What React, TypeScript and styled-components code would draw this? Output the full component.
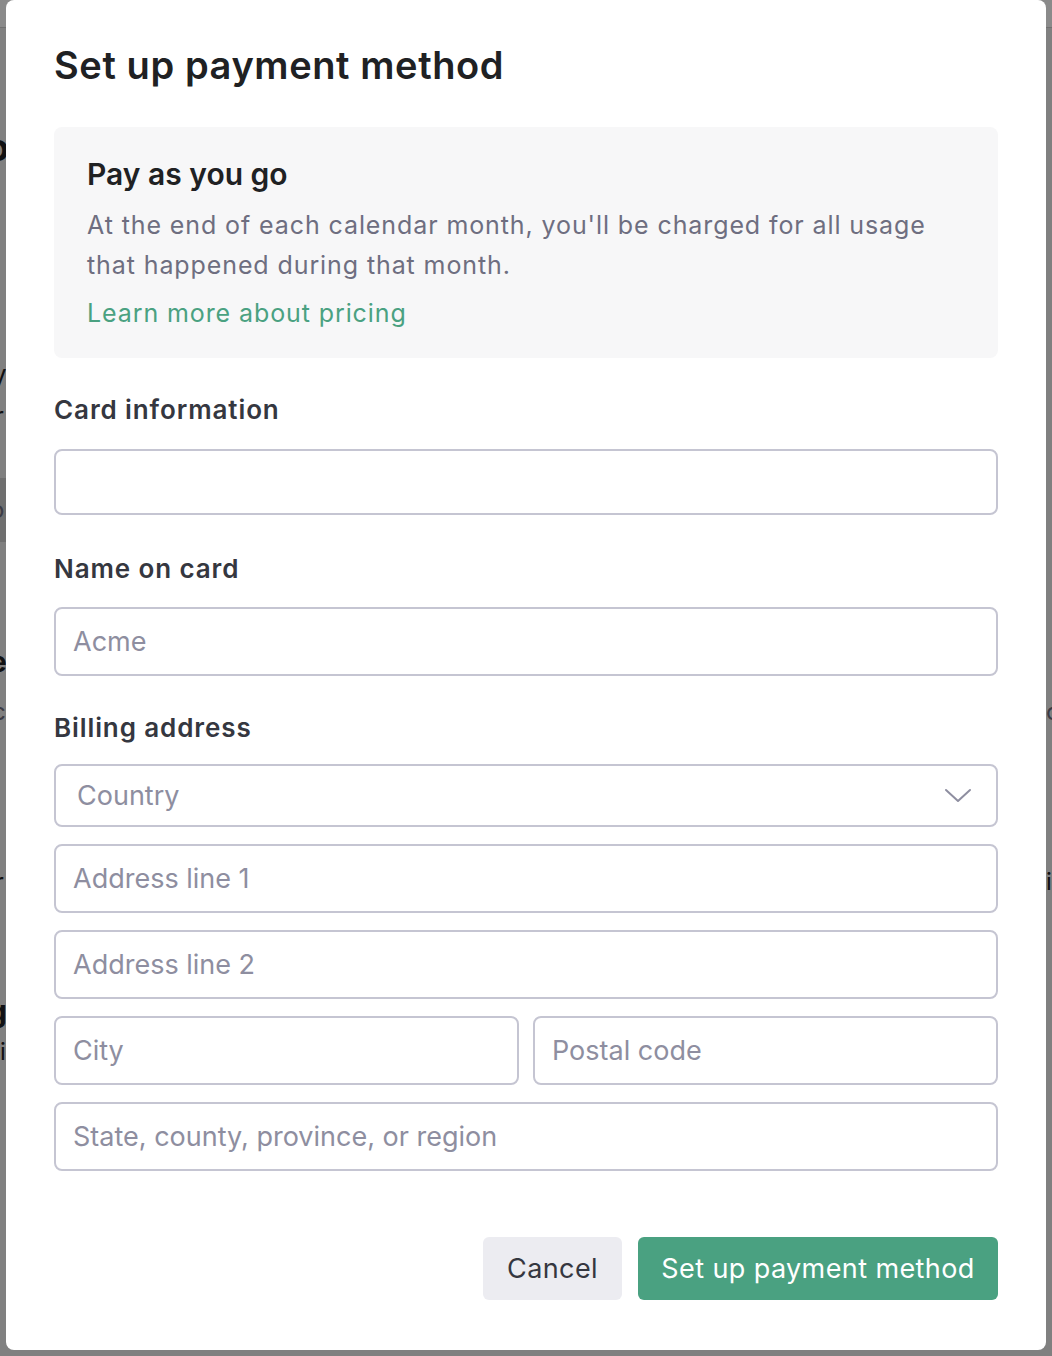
import React from "react";
import styled, { createGlobalStyle } from "styled-components";

const Global = createGlobalStyle`
  html, body { margin: 0; padding: 0; }
  body { font-family: Inter, "Noto Sans", "Liberation Sans", sans-serif; -webkit-font-smoothing: antialiased; }
  * { box-sizing: border-box; }
`;

const Page = styled.div`
  position: relative;
  width: 1052px;
  height: 1356px;
  overflow: hidden;
  background: #ececec;
`;

const PageHeader = styled.div`
  height: 28px;
  background: #ffffff;
  border-bottom: 1px solid #d0d0d0;
`;

const NavBand = styled.div`
  position: absolute;
  left: 0;
  top: 478px;
  width: 40px;
  height: 64px;
  background: #cdcdcd;
`;

const Glyph = styled.span<{ $top: number; $left: number; $size: number; $bold?: boolean; $light?: boolean }>`
  position: absolute;
  top: ${(p) => p.$top}px;
  left: ${(p) => p.$left}px;
  font-size: ${(p) => p.$size}px;
  line-height: 1;
  font-weight: ${(p) => (p.$bold ? 700 : 400)};
  color: ${(p) => (p.$light ? "#6e6e80" : "#202123")};
`;

const Overlay = styled.div`
  position: absolute;
  inset: 0;
  background: rgba(0, 0, 0, 0.46);
  display: flex;
  justify-content: center;
  align-items: flex-start;
`;

const Modal = styled.div`
  width: 1040px;
  height: 1350px;
  background: #ffffff;
  border-radius: 8px;
  padding: 39px 48px 0 48px;
  display: flex;
  flex-direction: column;
`;

const Title = styled.h1`
  margin: 0;
  font-size: 38px;
  line-height: 52px;
  font-weight: 600;
  color: #202123;
  letter-spacing: 0.6px;
`;

const InfoBox = styled.div`
  margin-top: 36px;
  background: #f7f7f8;
  border-radius: 8px;
  padding: 26px 32px 29px 33px;
  display: flex;
  flex-direction: column;
`;

const InfoTitle = styled.div`
  font-size: 30px;
  line-height: 42px;
  font-weight: 600;
  color: #202123;
`;

const InfoText = styled.p`
  margin: 10px 0 0 0;
  font-size: 25px;
  line-height: 40px;
  letter-spacing: 0.9px;
  color: #6e6e80;
`;

const InfoLink = styled.a`
  margin-top: 12px;
  font-size: 25px;
  line-height: 32px;
  letter-spacing: 0.9px;
  color: #4aa181;
  text-decoration: none;
`;

const Label = styled.div<{ $top: number }>`
  margin-top: ${(p) => p.$top}px;
  font-size: 26px;
  line-height: 32px;
  font-weight: 600;
  letter-spacing: 0.9px;
  color: #353740;
`;

const Field = styled.div<{ $h: number; $top: number; $indent?: number }>`
  margin-top: ${(p) => p.$top}px;
  height: ${(p) => p.$h}px;
  flex: none;
  border: 2px solid #c5c5d2;
  border-radius: 8px;
  display: flex;
  align-items: center;
  justify-content: space-between;
  padding: 0 24px 0 ${(p) => p.$indent ?? 17}px;
  font-size: 27px;
  color: #8e8ea0;
`;

const Row = styled.div`
  display: grid;
  grid-template-columns: 1fr 1fr;
  gap: 14px;
  margin-top: 17px;
`;

const Actions = styled.div`
  margin-top: 66px;
  display: flex;
  justify-content: flex-end;
  gap: 16px;
`;

const Button = styled.button<{ $primary?: boolean }>`
  height: 63px;
  border: none;
  border-radius: 6px;
  padding: 0;
  font-family: inherit;
  font-size: 27px;
  letter-spacing: 0.4px;
  background: ${(p) => (p.$primary ? "#4aa181" : "#ececf1")};
  color: ${(p) => (p.$primary ? "#ffffff" : "#353740")};
  width: ${(p) => (p.$primary ? 360 : 139)}px;
`;

const Chevron = () => (
  <svg width="28" height="16" viewBox="0 0 28 16" fill="none">
    <path d="M2 2 L14 13 L26 2" stroke="#8e8ea0" strokeWidth="2" strokeLinecap="round" strokeLinejoin="round" />
  </svg>
);

export default function App() {
  return (
    <>
      <Global />
      <Page>
        <PageHeader />
        <NavBand />
        <Glyph $top={128} $left={-14} $size={38} $bold>o</Glyph>
        <Glyph $top={362} $left={-8} $size={26}>y</Glyph>
        <Glyph $top={404} $left={-6} $size={26}>r</Glyph>
        <Glyph $top={498} $left={-10} $size={24} $light>o</Glyph>
        <Glyph $top={648} $left={-10} $size={28} $bold>e</Glyph>
        <Glyph $top={700} $left={-8} $size={24} $light>c</Glyph>
        <Glyph $top={870} $left={-6} $size={26}>r</Glyph>
        <Glyph $top={996} $left={-12} $size={30} $bold>g</Glyph>
        <Glyph $top={1040} $left={0} $size={24}>i</Glyph>
        <Glyph $top={700} $left={1046} $size={24} $light>c</Glyph>
        <Glyph $top={870} $left={1046} $size={24}>i</Glyph>
        <Overlay>
          <Modal>
            <Title>Set up payment method</Title>
            <InfoBox>
              <InfoTitle>Pay as you go</InfoTitle>
              <InfoText>
                At the end of each calendar month, you'll be charged for all usage that happened during that month.
              </InfoText>
              <InfoLink href="#">Learn more about pricing</InfoLink>
            </InfoBox>
            <Label $top={36}>Card information</Label>
            <Field $top={23} $h={66} />
            <Label $top={38}>Name on card</Label>
            <Field $top={22} $h={69}>Acme</Field>
            <Label $top={36}>Billing address</Label>
            <Field $top={20} $h={63} $indent={21}>
              Country
              <Chevron />
            </Field>
            <Field $top={17} $h={69}>Address line 1</Field>
            <Field $top={17} $h={69}>Address line 2</Field>
            <Row>
              <Field $top={0} $h={69}>City</Field>
              <Field $top={0} $h={69}>Postal code</Field>
            </Row>
            <Field $top={17} $h={69}>State, county, province, or region</Field>
            <Actions>
              <Button>Cancel</Button>
              <Button $primary>Set up payment method</Button>
            </Actions>
          </Modal>
        </Overlay>
      </Page>
    </>
  );
}
